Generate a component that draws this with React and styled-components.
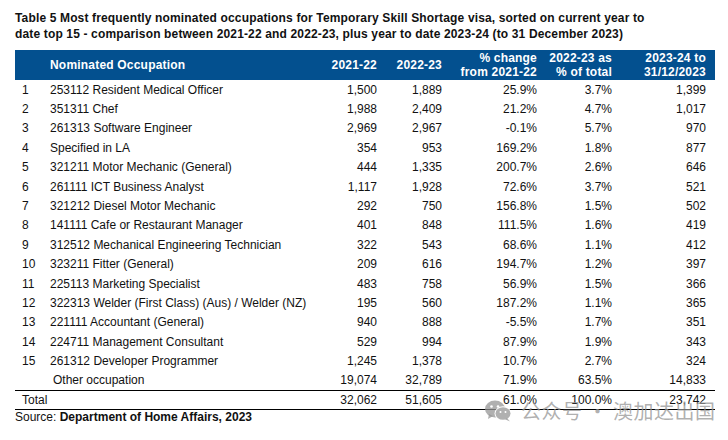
import React from "react";
import styled, { createGlobalStyle } from "styled-components";

const GlobalStyle = createGlobalStyle`
  html, body {
    margin: 0;
    padding: 0;
    background: #ffffff;
  }
  body {
    font-family: "Liberation Sans", Arial, sans-serif;
    color: #111;
  }
`;

const Page = styled.div`
  width: 728px;
  height: 440px;
  padding: 10px 0 0 15px;
  box-sizing: border-box;
  position: relative;
  overflow: hidden;
`;

const Title = styled.h1`
  margin: 0 0 8px 0;
  font-size: 12px;
  line-height: 16px;
  font-weight: bold;
  letter-spacing: 0.15px;
  color: #111;
  width: 700px;
`;

const Table = styled.table`
  width: 700px;
  border-collapse: collapse;
  table-layout: fixed;
  font-size: 12px;
`;

const HeadRow = styled.tr`
  background: #03508f;
  height: 30px;
`;

const Th = styled.th`
  color: #fff;
  font-weight: bold;
  font-size: 12px;
  line-height: 14px;
  letter-spacing: 0.2px;
  padding: 0 ${(p) => (p.$left ? "0" : "9px")} 0 ${(p) => (p.$pad || 0)}px;
  text-align: ${(p) => (p.$left ? "left" : "right")};
  vertical-align: middle;
`;

const Row = styled.tr`
  height: 19.4px;
  ${(p) =>
    p.$total &&
    `
    height: 19px;
    border-top: 1px solid #000;
    border-bottom: 1px solid #000;
  `}
`;

const Td = styled.td`
  padding: 0 ${(p) => (p.$left ? "0" : "9px")} 0 ${(p) => (p.$pad || 0)}px;
  text-align: ${(p) => (p.$left ? "left" : "right")};
  white-space: nowrap;
  line-height: 14px;
  color: #111;
`;

const Source = styled.div`
  font-size: 12px;
  line-height: 15px;
  color: #111;
  b {
    font-weight: bold;
  }
`;

const Watermark = styled.div`
  position: absolute;
  left: 485px;
  top: 398px;
  display: flex;
  align-items: center;
  gap: 9px;
  color: rgba(150, 150, 150, 0.75);
  font-family: "Noto Sans CJK SC", sans-serif;
  font-size: 20px;
  line-height: 26px;
  letter-spacing: 0.5px;
  pointer-events: none;
`;

const rows = [
  ["1", "253112 Resident Medical Officer", "1,500", "1,889", "25.9%", "3.7%", "1,399"],
  ["2", "351311 Chef", "1,988", "2,409", "21.2%", "4.7%", "1,017"],
  ["3", "261313 Software Engineer", "2,969", "2,967", "-0.1%", "5.7%", "970"],
  ["4", "Specified in LA", "354", "953", "169.2%", "1.8%", "877"],
  ["5", "321211 Motor Mechanic (General)", "444", "1,335", "200.7%", "2.6%", "646"],
  ["6", "261111 ICT Business Analyst", "1,117", "1,928", "72.6%", "3.7%", "521"],
  ["7", "321212 Diesel Motor Mechanic", "292", "750", "156.8%", "1.5%", "502"],
  ["8", "141111 Cafe or Restaurant Manager", "401", "848", "111.5%", "1.6%", "419"],
  ["9", "312512 Mechanical Engineering Technician", "322", "543", "68.6%", "1.1%", "412"],
  ["10", "323211 Fitter (General)", "209", "616", "194.7%", "1.2%", "397"],
  ["11", "225113 Marketing Specialist", "483", "758", "56.9%", "1.5%", "366"],
  ["12", "322313 Welder (First Class) (Aus) / Welder (NZ)", "195", "560", "187.2%", "1.1%", "365"],
  ["13", "221111 Accountant (General)", "940", "888", "-5.5%", "1.7%", "351"],
  ["14", "224711 Management Consultant", "529", "994", "87.9%", "1.9%", "343"],
  ["15", "261312 Developer Programmer", "1,245", "1,378", "10.7%", "2.7%", "324"],
];

function WeChatIcon() {
  return (
    <svg width="27" height="22" viewBox="0 0 27 22" fill="currentColor">
      <ellipse cx="10" cy="9" rx="10" ry="8.5" />
      <path d="M4 14 L3 19 L8 16 Z" />
      <ellipse cx="18" cy="13.5" rx="8.5" ry="7.2" fill="#fff" />
      <ellipse cx="18" cy="13.5" rx="7.5" ry="6.3" />
      <path d="M22 18 L25 21.5 L20.5 19.5 Z" />
      <circle cx="6.5" cy="6.5" r="1.3" fill="#fff" />
      <circle cx="13" cy="6.5" r="1.3" fill="#fff" />
      <circle cx="15.5" cy="12" r="1" fill="#fff" />
      <circle cx="20.5" cy="12" r="1" fill="#fff" />
    </svg>
  );
}

export default function App() {
  return (
    <Page>
      <GlobalStyle />
      <Title>
        Table 5 Most frequently nominated occupations for Temporary Skill Shortage visa, sorted on current year to
        <br />
        date top 15 - comparison between 2021-22 and 2022-23, plus year to date 2023-24 (to 31 December 2023)
      </Title>
      <Table>
        <colgroup>
          <col style={{ width: 35 }} />
          <col style={{ width: 276 }} />
          <col style={{ width: 60 }} />
          <col style={{ width: 65 }} />
          <col style={{ width: 95 }} />
          <col style={{ width: 75 }} />
          <col style={{ width: 94 }} />
        </colgroup>
        <thead>
          <HeadRow>
            <Th $left $pad={7}></Th>
            <Th $left>Nominated Occupation</Th>
            <Th>2021-22</Th>
            <Th>2022-23</Th>
            <Th>
              % change
              <br />
              from 2021-22
            </Th>
            <Th>
              2022-23 as
              <br />% of total
            </Th>
            <Th>
              2023-24 to
              <br />
              31/12/2023
            </Th>
          </HeadRow>
        </thead>
        <tbody>
          {rows.map((r) => (
            <Row key={r[0]}>
              <Td $left $pad={7}>{r[0]}</Td>
              <Td $left>{r[1]}</Td>
              <Td>{r[2]}</Td>
              <Td>{r[3]}</Td>
              <Td>{r[4]}</Td>
              <Td>{r[5]}</Td>
              <Td>{r[6]}</Td>
            </Row>
          ))}
          <Row>
            <Td $left $pad={7}></Td>
            <Td $left $pad={3}>Other occupation</Td>
            <Td>19,074</Td>
            <Td>32,789</Td>
            <Td>71.9%</Td>
            <Td>63.5%</Td>
            <Td>14,833</Td>
          </Row>
          <Row $total>
            <Td $left $pad={7}>Total</Td>
            <Td $left></Td>
            <Td>32,062</Td>
            <Td>51,605</Td>
            <Td>61.0%</Td>
            <Td>100.0%</Td>
            <Td>23,742</Td>
          </Row>
        </tbody>
      </Table>
      <Source>
        Source: <b>Department of Home Affairs, 2023</b>
      </Source>
      <Watermark>
        <WeChatIcon />
        <span>公众号 · 澳加达出国</span>
      </Watermark>
    </Page>
  );
}
